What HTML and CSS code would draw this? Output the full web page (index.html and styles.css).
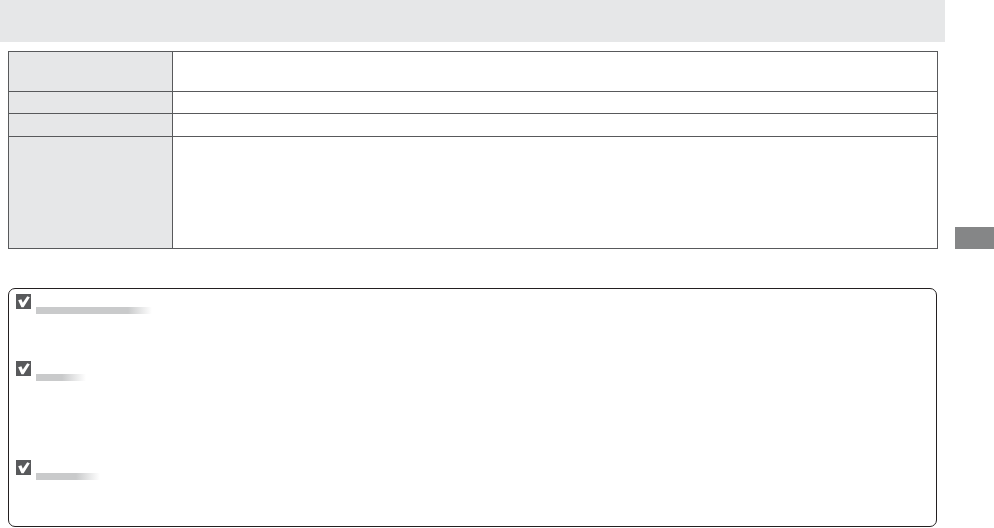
FILE: index.html
```html
<!DOCTYPE html>
<html>
<head>
<meta charset="utf-8">
<link rel="stylesheet" href="styles.css">
</head>
<body>
<div class="page">
  <div class="header"></div>
  <div class="table">
    <div class="cell label r1"></div><div class="cell value r1"></div>
    <div class="cell label r2"></div><div class="cell value r2"></div>
    <div class="cell label r3"></div><div class="cell value r3"></div>
    <div class="cell label r4"></div><div class="cell value r4"></div>
  </div>
  <div class="side-tab"></div>
  <div class="note">
    <div class="item i1">
      <svg class="check" width="15" height="15" viewBox="0 0 15 15"><rect width="15" height="15" fill="#58595b"/><path d="M2.2 6.2 L5.4 5.2 L6.8 8.8 L11.2 2.2 L13.8 3.2 L7.6 13.2 L5.4 13.2 Z" fill="#fff"/></svg>
      <div class="bar" style="width:116px"></div>
    </div>
    <div class="item i2">
      <svg class="check" width="15" height="15" viewBox="0 0 15 15"><rect width="15" height="15" fill="#58595b"/><path d="M2.2 6.2 L5.4 5.2 L6.8 8.8 L11.2 2.2 L13.8 3.2 L7.6 13.2 L5.4 13.2 Z" fill="#fff"/></svg>
      <div class="bar" style="width:50px"></div>
    </div>
    <div class="item i3">
      <svg class="check" width="15" height="15" viewBox="0 0 15 15"><rect width="15" height="15" fill="#58595b"/><path d="M2.2 6.2 L5.4 5.2 L6.8 8.8 L11.2 2.2 L13.8 3.2 L7.6 13.2 L5.4 13.2 Z" fill="#fff"/></svg>
      <div class="bar" style="width:64px"></div>
    </div>
  </div>
</div>
</body>
</html>
```
FILE: styles.css
```css
html, body {
  margin: 0;
  padding: 0;
  background: #fff;
  font-family: "Liberation Sans", Arial, sans-serif;
}
.page {
  position: relative;
  width: 994px;
  height: 528px;
  overflow: hidden;
}
.header {
  width: 945px;
  height: 42px;
  background: #e6e7e8;
}
.table {
  margin: 9px 0 0 8px;
  width: 928px;
  padding: 1px;
  background: #58595b;
  display: grid;
  grid-template-columns: 163px 1fr;
  grid-template-rows: 39px 21px 22px 111px;
  gap: 1px;
}
.cell.label { background: #e6e7e8; }
.cell.value { background: #fff; }
.side-tab {
  position: absolute;
  left: 955px;
  top: 227px;
  width: 39px;
  height: 22px;
  background: #858687;
}
.note {
  margin: 39px 0 0 8px;
  width: 927px;
  height: 237px;
  border: 1.5px solid #231f20;
  border-radius: 7px;
  padding: 0;
  box-sizing: content-box;
}
.item {
  padding-left: 6.5px;
}
.item.i1 { padding-top: 4.5px; height: 67.5px; }
.item.i2 { height: 99px; }
.check {
  display: block;
}
.bar {
  height: 7px;
  margin: -2px 0 0 20px;
  background: linear-gradient(to right, #c9cacb 0, #c9cacb calc(100% - 24px), #ffffff 100%);
}
```
